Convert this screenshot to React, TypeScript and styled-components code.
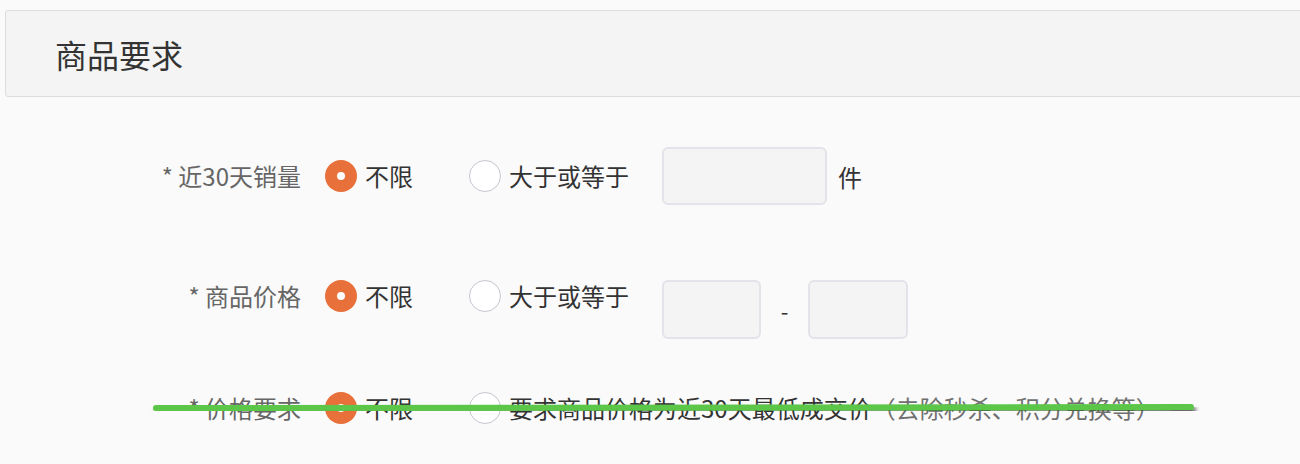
import styled, { createGlobalStyle } from 'styled-components'

const GlobalStyle = createGlobalStyle`
  html, body {
    margin: 0;
    padding: 0;
    background: #fafafa;
    font-family: "Noto Sans CJK SC", "Noto Sans", sans-serif;
    overflow: hidden;
  }
`

const Page = styled.div`
  position: relative;
  width: 1300px;
  height: 464px;
  padding: 10px 0 0 5px;
  box-sizing: border-box;
  overflow: hidden;
`

const Header = styled.div`
  width: 1320px;
  height: 87px;
  box-sizing: border-box;
  display: flex;
  align-items: center;
  padding-left: 49px;
  background: #f4f4f4;
  border: 1px solid #dcdcdc;
  border-radius: 3px;
  font-size: 32px;
  color: #333;
`

const Form = styled.div`
  display: flex;
  flex-direction: column;
  margin-left: -5px;
`

const Row = styled.div<{ $top: number; $align?: string }>`
  display: flex;
  align-items: ${(p) => p.$align || 'center'};
  margin-top: ${(p) => p.$top}px;
`

const Label = styled.div`
  width: 301px;
  flex: none;
  text-align: right;
  font-size: 24px;
  line-height: 32px;
  color: #666;
  margin-right: 24px;
`

const Option = styled.label`
  display: flex;
  align-items: center;
  margin-right: 56px;
  font-size: 24px;
  line-height: 32px;
  color: #333;
  cursor: pointer;
`

const Radio = styled.span<{ $checked?: boolean }>`
  width: 32px;
  height: 32px;
  box-sizing: border-box;
  border-radius: 50%;
  margin-right: 8px;
  flex: none;
  display: flex;
  align-items: center;
  justify-content: center;
  background: ${(p) => (p.$checked ? '#e8703a' : '#fff')};
  border: ${(p) => (p.$checked ? 'none' : '1.5px solid #c6c7cf')};

  &::after {
    content: '';
    display: ${(p) => (p.$checked ? 'block' : 'none')};
    width: 8px;
    height: 8px;
    border-radius: 50%;
    background: #fff;
  }
`

const InputGroup = styled.div`
  display: flex;
  align-items: center;
  margin-left: -23px;
`

const Input = styled.div<{ $w: number; $h: number }>`
  width: ${(p) => p.$w}px;
  height: ${(p) => p.$h}px;
  box-sizing: border-box;
  background: #f4f4f4;
  border: 2px solid #e3e3e9;
  border-radius: 6px;
`

const Unit = styled.span`
  margin-left: 11px;
  font-size: 24px;
  color: #333;
`

const Dash = styled.span`
  width: 47px;
  text-align: center;
  font-size: 22px;
  color: #333;
`

const Hint = styled.span`
  color: #6f6f6f;
`

const Stroke = styled.svg`
  position: absolute;
  left: 0;
  top: 0;
  pointer-events: none;
`

export default function App() {
  return (
    <>
      <GlobalStyle />
      <Page>
        <Header>商品要求</Header>
        <Form>
          <Row $top={50}>
            <Label>* 近30天销量</Label>
            <Option>
              <Radio $checked />
              不限
            </Option>
            <Option>
              <Radio />
              大于或等于
            </Option>
            <InputGroup>
              <Input $w={165} $h={58} />
              <Unit>件</Unit>
            </InputGroup>
          </Row>
          <Row $top={75} $align="flex-start">
            <Label>* 商品价格</Label>
            <Option>
              <Radio $checked />
              不限
            </Option>
            <Option>
              <Radio />
              大于或等于
            </Option>
            <InputGroup>
              <Input $w={99} $h={59} />
              <Dash>-</Dash>
              <Input $w={100} $h={59} />
            </InputGroup>
          </Row>
          <Row $top={53}>
            <Label>* 价格要求</Label>
            <Option>
              <Radio $checked />
              不限
            </Option>
            <Option>
              <Radio />
              <span>
                要求商品价格为近30天最低成交价<Hint>（去除秒杀、积分兑换等）</Hint>
              </span>
            </Option>
          </Row>
        </Form>
        <Stroke width="1300" height="464">
          <defs>
            <filter id="sh" x="-5%" y="-300%" width="110%" height="700%">
              <feGaussianBlur in="SourceAlpha" stdDeviation="2.2" />
              <feOffset dx="2" dy="3" result="b" />
              <feComponentTransfer>
                <feFuncA type="linear" slope="0.7" />
              </feComponentTransfer>
              <feMerge>
                <feMergeNode />
                <feMergeNode in="SourceGraphic" />
              </feMerge>
            </filter>
          </defs>
          <line
            x1="156"
            y1="408"
            x2="1191"
            y2="407"
            stroke="#5cc64a"
            strokeWidth="6"
            strokeLinecap="round"
            filter="url(#sh)"
          />
        </Stroke>
      </Page>
    </>
  )
}
